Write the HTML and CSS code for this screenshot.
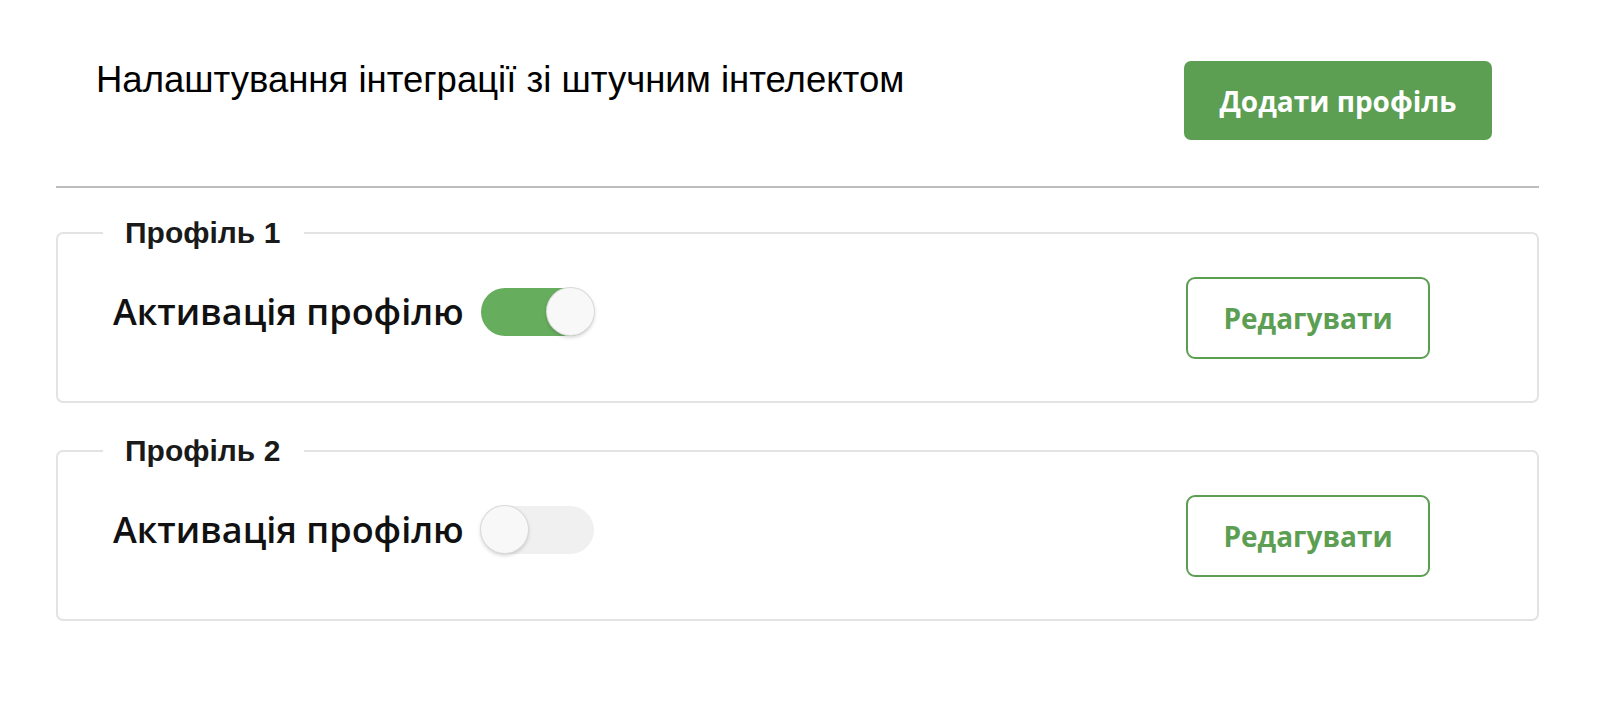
FILE: index.html
```html
<!DOCTYPE html>
<html lang="uk">
<head>
  <meta charset="UTF-8">
  <meta name="viewport" content="width=device-width, initial-scale=1.0">
  <title>Налаштування інтеграції зі штучним інтелектом</title>
  <link rel="stylesheet" href="styles.css">
</head>
<body>

<main class="settings">
  <!-- Header -->
  <header class="settings-head">
    <h1 class="settings-title">Налаштування інтеграції зі штучним інтелектом</h1>
    <button type="button" class="btn btn-primary">Додати профіль</button>
  </header>

  <hr class="divider">

  <!-- Profiles -->
  <fieldset class="profile">
    <legend>Профіль 1</legend>
    <div class="profile-row">
      <label class="activation">
        <span>Активація профілю</span>
        <input type="checkbox" checked>
        <span class="switch"></span>
      </label>
      <button type="button" class="btn btn-outline">Редагувати</button>
    </div>
  </fieldset>

  <fieldset class="profile">
    <legend>Профіль 2</legend>
    <div class="profile-row">
      <label class="activation">
        <span>Активація профілю</span>
        <input type="checkbox">
        <span class="switch"></span>
      </label>
      <button type="button" class="btn btn-outline">Редагувати</button>
    </div>
  </fieldset>
</main>

</body>
</html>
```

FILE: styles.css
```css
/* General Styles */
* {
  box-sizing: border-box;
}

body {
  margin: 0;
  font-family: "Liberation Sans", Arial, sans-serif;
  background-color: #fff;
  color: #111;
}

.settings {
  padding: 0 61px 0 56px;
}

/* Header */
.settings-head {
  display: flex;
  justify-content: space-between;
  align-items: flex-start;
  padding: 61px 47px 0 40px;
}

.settings-title {
  margin: -2px 0 0;
  font-size: 36.5px;
  line-height: 42px;
  font-weight: 400;
  color: #000;
}

.divider {
  margin: 46px 0 0;
  height: 2px;
  border: none;
  background-color: #bdbdbd;
}

/* Buttons */
.btn {
  font-family: "Open Sans", "Noto Sans", sans-serif;
  font-weight: 700;
  font-size: 28px;
  cursor: pointer;
}

.btn-primary {
  width: 308px;
  height: 79px;
  background-color: #5c9e52;
  color: white;
  border: none;
  border-radius: 7px;
}

.btn-outline {
  width: 244px;
  height: 82px;
  background-color: white;
  color: #5c9e52;
  border: 2px solid #5c9e52;
  border-radius: 9px;
}

/* Profile cards */
.profile {
  margin: 27px 0 0;
  padding: 0;
  border: 2px solid #e3e3e3;
  border-radius: 7px;
}

.profile + .profile {
  margin-top: 30px;
}

.profile legend {
  margin-left: 45px;
  padding: 0 24px 0 22px;
  font-size: 30px;
  line-height: 36px;
  font-weight: 700;
  color: #1a1a1a;
}

.profile-row {
  display: flex;
  justify-content: space-between;
  align-items: center;
  padding: 26px 107px 42px 55px;
}

.activation {
  display: flex;
  align-items: center;
  gap: 17px;
  margin-bottom: 12px;
  font-family: "Open Sans", "Noto Sans", sans-serif;
  font-weight: 600;
  font-size: 36px;
  line-height: 48px;
  color: #111;
  cursor: pointer;
}

.activation input {
  display: none;
}

/* Toggle switch */
.switch {
  position: relative;
  width: 113px;
  height: 48px;
  border-radius: 24px;
  background-color: #f0f0f0;
}

.switch::after {
  content: "";
  position: absolute;
  top: 0;
  left: 0;
  width: 47px;
  height: 47px;
  border-radius: 50%;
  background-color: #f8f8f8;
  box-shadow: 0 0 0 1px #d9d9d9, 0 2px 4px rgba(0, 0, 0, 0.22);
}

.activation input:checked + .switch {
  background-color: #66ad5e;
}

.activation input:checked + .switch::after {
  left: auto;
  right: 0;
}
```
